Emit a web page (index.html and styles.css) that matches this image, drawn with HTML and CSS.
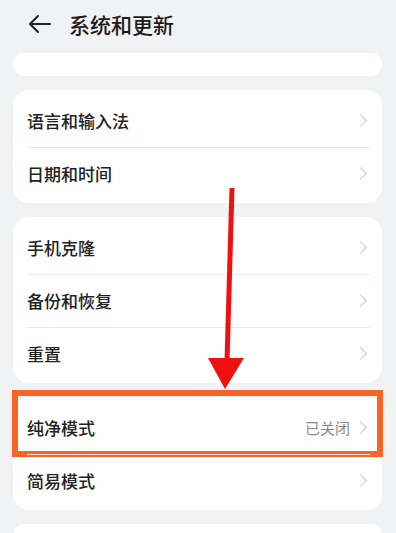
FILE: index.html
```html
<!DOCTYPE html>
<html lang="zh-CN">
<head>
    <meta charset="UTF-8">
    <meta name="viewport" content="width=device-width, initial-scale=1.0">
    <title>系统和更新</title>
    <link rel="stylesheet" href="styles.css">
</head>
<body>

<div class="page">
    <!-- 顶部栏 -->
    <div class="topbar">
        <svg class="back" width="24" height="20" viewBox="0 0 24 20">
            <path d="M22 10 H3 M10 2 L2 10 L10 18" fill="none" stroke="#222" stroke-width="2" stroke-linecap="round" stroke-linejoin="round"/>
        </svg>
        <h1>系统和更新</h1>
    </div>

    <div class="card card-cut"></div>

    <div class="card">
        <div class="row"><span class="label">语言和输入法</span><span class="chev"></span></div>
        <div class="row"><span class="label">日期和时间</span><span class="chev"></span></div>
    </div>

    <div class="card">
        <div class="row"><span class="label">手机克隆</span><span class="chev"></span></div>
        <div class="row"><span class="label">备份和恢复</span><span class="chev"></span></div>
        <div class="row"><span class="label">重置</span><span class="chev"></span></div>
    </div>

    <div class="card">
        <div class="row marked">
            <span class="label">纯净模式</span>
            <span class="value">已关闭</span><span class="chev"></span>
            <div class="highlight"></div>
        </div>
        <div class="row"><span class="label">简易模式</span><span class="chev"></span></div>
    </div>

    <div class="card card-cut"></div>

    <!-- 红色箭头 -->
    <svg class="arrow" width="42" height="206" viewBox="0 0 42 206">
        <line x1="27" y1="3" x2="22" y2="176" stroke="#f01010" stroke-width="5"/>
        <polygon points="3,173 39,173 20,204" fill="#f01010"/>
    </svg>
</div>

</body>
</html>
```

FILE: styles.css
```css
body {
    margin: 0;
    padding: 0;
    background-color: #f1f2f4;
    font-family: "Noto Sans CJK SC", "Noto Sans", sans-serif;
    color: #1f1f1f;
}
.page {
    position: relative;
    width: 396px;
    height: 533px;
    overflow: hidden;
    padding: 0 14px 0 13px;
    box-sizing: border-box;
}
.topbar {
    height: 48px;
    margin-bottom: 5px;
    display: flex;
    align-items: center;
    padding-left: 15px;
}
.back {
    margin-right: 17px;
}
h1 {
    margin: 0;
    font-size: 21px;
    font-weight: 500;
    color: #1a1a1a;
}
.card {
    background: #ffffff;
    border-radius: 16px;
    padding: 4px 0 3px;
    margin-bottom: 14px;
}
.card-cut {
    height: 23px;
    padding: 0;
    border-radius: 12px;
}
.row {
    position: relative;
    height: 53px;
    display: flex;
    align-items: center;
    padding: 0 17px 0 14px;
}
.row + .row::before {
    content: "";
    position: absolute;
    top: 0;
    left: 14px;
    right: 12px;
    border-top: 1px solid #e9e9eb;
}
.label {
    flex: 1;
    font-size: 17px;
    font-weight: 500;
    color: #222;
}
.value {
    font-size: 15px;
    color: #8a8a8a;
    margin-right: 6px;
}
.chev {
    width: 8px;
    height: 8px;
    border-top: 1.5px solid #c4c4c4;
    border-right: 1.5px solid #c4c4c4;
    transform: rotate(45deg);
    margin-right: 0;
}
.highlight {
    position: absolute;
    top: -11px;
    bottom: -3px;
    left: -1px;
    right: -1px;
    border: 6px solid #fb6325;
}
.arrow {
    position: absolute;
    left: 205px;
    top: 185px;
}
```
